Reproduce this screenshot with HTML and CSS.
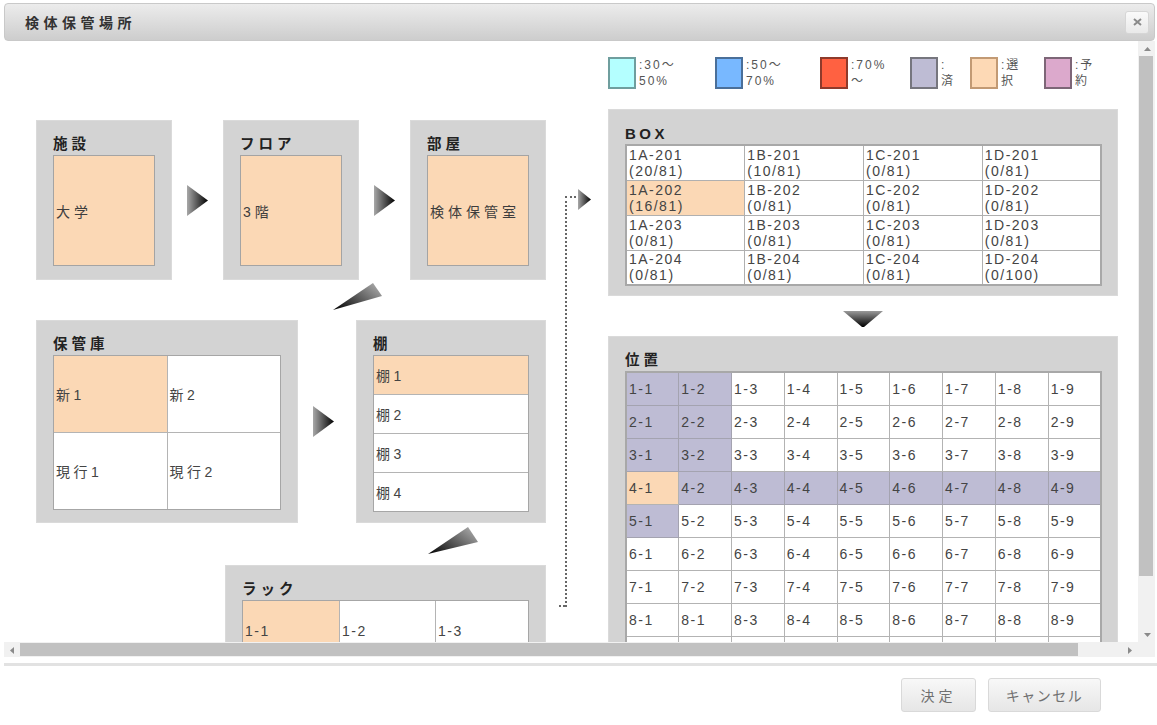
FILE: index.html
```html
<!DOCTYPE html>
<html lang="ja">
<head>
<meta charset="utf-8">
<title>検体保管場所</title>
<link rel="stylesheet" href="styles.css">
</head>
<body>
<div class="dialog">
  <div class="titlebar">
    <span class="title">検体保管場所</span>
    <button class="close" type="button" aria-label="閉じる">
      <svg width="9" height="8" viewBox="0 0 9 8"><path d="M1 1L8 7M8 1L1 7" stroke="#8a8a8a" stroke-width="2"/></svg>
    </button>
  </div>

  <div class="scrollarea">
    <div class="viewport">
      <div class="canvas">
        <div class="leftcol">
          <div class="row row1">
            <section class="panel p-small">
              <h3>施設</h3>
              <div class="single sel">大学</div>
            </section>
            <svg class="arrow-r" width="21" height="31" viewBox="0 0 21 31"><defs><linearGradient id="gr1" x1="0" y1="0" x2="1" y2="0"><stop offset="0" stop-color="#a8a8a8"/><stop offset="1" stop-color="#000"/></linearGradient></defs><polygon points="0,0 21,15.5 0,31" fill="url(#gr1)"/></svg>
            <section class="panel p-small">
              <h3>フロア</h3>
              <div class="single sel">3階</div>
            </section>
            <svg class="arrow-r" width="21" height="31" viewBox="0 0 21 31"><polygon points="0,0 21,15.5 0,31" fill="url(#gr1)"/></svg>
            <section class="panel p-small">
              <h3>部屋</h3>
              <div class="single sel">検体保管室</div>
            </section>
          </div>

          <div class="diag diag1">
            <svg width="50" height="28" viewBox="0 0 50 28"><defs><linearGradient id="gd" x1="0" y1="1" x2="1" y2="0.3"><stop offset="0" stop-color="#000"/><stop offset="1" stop-color="#a0a0a0"/></linearGradient></defs><polygon points="0,27 40,0 49,13" fill="url(#gd)"/></svg>
          </div>

          <div class="row row2">
            <section class="panel p-kura">
              <h3>保管庫</h3>
              <div class="kura">
                <div class="cell sel">新1</div>
                <div class="cell">新2</div>
                <div class="cell">現行1</div>
                <div class="cell">現行2</div>
              </div>
            </section>
            <svg class="arrow-r arrow-r2" width="21" height="31" viewBox="0 0 21 31"><polygon points="0,0 21,15.5 0,31" fill="url(#gr1)"/></svg>
            <section class="panel p-tana">
              <h3>棚</h3>
              <div class="tana">
                <div class="cell sel">棚1</div>
                <div class="cell">棚2</div>
                <div class="cell">棚3</div>
                <div class="cell">棚4</div>
              </div>
            </section>
          </div>

          <div class="diag diag2">
            <svg width="50" height="28" viewBox="0 0 50 28"><polygon points="0,27 40,0 50,15" fill="url(#gd)"/></svg>
          </div>

          <div class="row row3">
            <section class="panel p-rack">
              <h3>ラック</h3>
              <div class="rack">
                <div class="cell sel">1-1</div>
                <div class="cell">1-2</div>
                <div class="cell">1-3</div>
              </div>
            </section>
          </div>
        </div>

        <div class="midcol">
          <div class="connector"></div>
          <svg class="arrow-s" width="13" height="21" viewBox="0 0 13 21"><polygon points="0,0 13,10.5 0,21" fill="url(#gr1)"/></svg>
        </div>

        <div class="rightcol">
          <div class="legend">
            <div class="lg"><span class="sw sw-cyan"></span><span class="lt">:30～<br>50%</span></div>
            <div class="lg"><span class="sw sw-blue"></span><span class="lt">:50～<br>70%</span></div>
            <div class="lg"><span class="sw sw-red"></span><span class="lt">:70%<br>～</span></div>
            <div class="lg"><span class="sw sw-used"></span><span class="lt">:<br>済</span></div>
            <div class="lg"><span class="sw sw-sel"></span><span class="lt">:選<br>択</span></div>
            <div class="lg"><span class="sw sw-res"></span><span class="lt">:予<br>約</span></div>
          </div>

          <section class="panel p-box">
            <h3 class="latin">BOX</h3>
            <table class="boxtable">
              <tr><td>1A-201<br>(20/81)</td><td>1B-201<br>(10/81)</td><td>1C-201<br>(0/81)</td><td>1D-201<br>(0/81)</td></tr>
              <tr><td class="sel">1A-202<br>(16/81)</td><td>1B-202<br>(0/81)</td><td>1C-202<br>(0/81)</td><td>1D-202<br>(0/81)</td></tr>
              <tr><td>1A-203<br>(0/81)</td><td>1B-203<br>(0/81)</td><td>1C-203<br>(0/81)</td><td>1D-203<br>(0/81)</td></tr>
              <tr><td>1A-204<br>(0/81)</td><td>1B-204<br>(0/81)</td><td>1C-204<br>(0/81)</td><td>1D-204<br>(0/100)</td></tr>
            </table>
          </section>

          <div class="down">
            <svg width="40" height="16" viewBox="0 0 40 16"><defs><linearGradient id="gdown" x1="0" y1="0" x2="0" y2="1"><stop offset="0" stop-color="#9a9a9a"/><stop offset="1" stop-color="#000"/></linearGradient></defs><polygon points="0,0 40,0 21,16 19,16" fill="url(#gdown)"/></svg>
          </div>

          <section class="panel p-pos">
            <h3>位置</h3>
            <table class="postable">
              <tr><td class="used">1-1</td><td class="used">1-2</td><td>1-3</td><td>1-4</td><td>1-5</td><td>1-6</td><td>1-7</td><td>1-8</td><td>1-9</td></tr>
              <tr><td class="used">2-1</td><td class="used">2-2</td><td>2-3</td><td>2-4</td><td>2-5</td><td>2-6</td><td>2-7</td><td>2-8</td><td>2-9</td></tr>
              <tr><td class="used">3-1</td><td class="used">3-2</td><td>3-3</td><td>3-4</td><td>3-5</td><td>3-6</td><td>3-7</td><td>3-8</td><td>3-9</td></tr>
              <tr><td class="sel">4-1</td><td class="used">4-2</td><td class="used">4-3</td><td class="used">4-4</td><td class="used">4-5</td><td class="used">4-6</td><td class="used">4-7</td><td class="used">4-8</td><td class="used">4-9</td></tr>
              <tr><td class="used">5-1</td><td>5-2</td><td>5-3</td><td>5-4</td><td>5-5</td><td>5-6</td><td>5-7</td><td>5-8</td><td>5-9</td></tr>
              <tr><td>6-1</td><td>6-2</td><td>6-3</td><td>6-4</td><td>6-5</td><td>6-6</td><td>6-7</td><td>6-8</td><td>6-9</td></tr>
              <tr><td>7-1</td><td>7-2</td><td>7-3</td><td>7-4</td><td>7-5</td><td>7-6</td><td>7-7</td><td>7-8</td><td>7-9</td></tr>
              <tr><td>8-1</td><td>8-1</td><td>8-3</td><td>8-4</td><td>8-5</td><td>8-6</td><td>8-7</td><td>8-8</td><td>8-9</td></tr>
              <tr class="partial"><td></td><td></td><td></td><td></td><td></td><td></td><td></td><td></td><td></td></tr>
            </table>
          </section>
        </div>
      </div>
    </div>

    <div class="vscroll">
      <div class="sbtn"><svg width="7" height="4" viewBox="0 0 7 4"><polygon points="0,4 3.5,0 7,4" fill="#8a8a8a"/></svg></div>
      <div class="vthumb"></div>
      <div class="sfill"></div>
      <div class="sbtn"><svg width="7" height="4" viewBox="0 0 7 4"><polygon points="0,0 7,0 3.5,4" fill="#8a8a8a"/></svg></div>
    </div>
    <div class="hscroll">
      <div class="sbtn hbtn"><svg width="4" height="7" viewBox="0 0 4 7"><polygon points="4,0 4,7 0,3.5" fill="#8a8a8a"/></svg></div>
      <div class="hthumb"></div>
      <div class="sfill"></div>
      <div class="sbtn hbtn"><svg width="4" height="7" viewBox="0 0 4 7"><polygon points="0,0 4,3.5 0,7" fill="#8a8a8a"/></svg></div>
    </div>
    <div class="corner"></div>
  </div>

  <div class="sep"></div>

  <div class="footer">
    <button class="btn btn-ok" type="button">決定</button>
    <button class="btn btn-cancel" type="button">キャンセル</button>
  </div>
</div>
</body>
</html>
```

FILE: styles.css
```css
* { box-sizing: border-box; }
html, body { margin: 0; padding: 0; background: #fff; }
body {
  width: 1157px;
  height: 725px;
  overflow: hidden;
  font-family: "Liberation Sans", "Noto Sans CJK JP", sans-serif;
  color: #444;
}

.dialog { padding: 3px 2px 0 4px; }

/* title bar */
.titlebar {
  height: 38px;
  display: flex;
  align-items: center;
  justify-content: space-between;
  padding: 0 5px 0 20px;
  border: 1px solid #c9c9c9;
  border-radius: 4px;
  background: linear-gradient(#ececec, #cdcdcd);
}
.title {
  font-size: 14px;
  font-weight: bold;
  letter-spacing: 4.5px;
  color: #333;
}
.close {
  width: 24px;
  height: 23px;
  padding: 0;
  display: flex;
  align-items: center;
  justify-content: center;
  border: 1px solid #d6d6d6;
  border-radius: 3px;
  background: linear-gradient(#fafafa, #e9e9e9);
}

/* scroll area */
.scrollarea {
  display: grid;
  grid-template-columns: 1134px 17px;
  grid-template-rows: 601px 15px;
}
.viewport { overflow: hidden; }
.canvas {
  display: flex;
  width: 1180px;
  padding-left: 32px;
}

/* left column */
.leftcol { width: 510px; flex: none; padding-top: 79px; }
.row { display: flex; align-items: center; }
.row1 { justify-content: space-between; }
.arrow-r { flex: none; }
.arrow-r2 { margin: 0 22px 0 15px; }

.panel {
  background: #d3d3d3;
  border: 1px solid #dadada;
  padding: 13px 16px 13px 16px;
}
.panel h3 {
  margin: 0;
  height: 21px;
  line-height: 21px;
  font-size: 14.5px;
  font-weight: bold;
  letter-spacing: 4px;
  color: #222;
}
.panel h3.latin { letter-spacing: 3.5px; font-size: 15px; }

.p-small { width: 136px; height: 160px; }
.single {
  height: 111px;
  border: 1px solid #a4a4a4;
  display: flex;
  align-items: center;
  padding-left: 2px;
  font-size: 14px;
  letter-spacing: 4px;
  color: #3d3d3d;
}

.sel { background: #fbd8b5; }
.used { background: #bebcd4; }

.cell {
  background: #fff;
  display: flex;
  align-items: center;
  padding-left: 2px;
  font-size: 14px;
  letter-spacing: 3.5px;
  color: #444;
}
.cell.sel { background: #fbd8b5; }

.p-kura { width: 262px; height: 203px; }
.kura {
  height: 155px;
  display: grid;
  grid-template-columns: 1fr 1fr;
  grid-template-rows: 1fr 1fr;
  gap: 1px;
  background: #b4b4b4;
  border: 1px solid #a6a6a6;
}
.p-tana { width: 190px; height: 203px; }
.tana {
  height: 157px;
  display: grid;
  grid-template-rows: repeat(4, 1fr);
  gap: 1px;
  background: #b4b4b4;
  border: 1px solid #a6a6a6;
}

.diag { height: 40px; padding-top: 3px; }
.diag1 { padding-left: 297px; }
.diag2 { height: 42px; padding-left: 392px; padding-top: 4px; }

.row3 { padding-left: 189px; align-items: flex-start; }
.p-rack { width: 321px; height: 120px; }
.rack {
  display: grid;
  grid-template-columns: 96px 95px 1fr;
  grid-template-rows: 60px;
  gap: 1px;
  background: #b4b4b4;
  border: 1px solid #a6a6a6;
}
.rack .cell { letter-spacing: 1.5px; }

/* middle connector */
.midcol {
  width: 62px;
  flex: none;
  display: flex;
  align-items: flex-start;
  padding-top: 148px;
  padding-left: 19px;
}
.connector {
  position: relative;
  width: 11px;
  height: 411px;
  margin-top: 7px;
  border-left: 2px dotted #666;
  border-top: 2px dotted #666;
}
.connector::after {
  content: "";
  position: absolute;
  left: -8px;
  bottom: 0;
  width: 6px;
  border-top: 2px dotted #666;
}
.arrow-s { margin-left: 2px; flex: none; }

/* right column */
.rightcol { width: 510px; flex: none; padding-top: 16px; }

.legend {
  display: grid;
  grid-template-columns: 107px 105px 90px 60px 74px auto;
  height: 32px;
  margin-bottom: 20px;
}
.lg { display: flex; align-items: flex-start; }
.sw {
  width: 28px;
  height: 32px;
  border: 2px solid #777;
  flex: none;
}
.sw-cyan { background: #b4ffff; border-color: #6f9e9e; }
.sw-blue { background: #78b8ff; border-color: #4a6f99; }
.sw-red { background: #ff6141; border-color: #8e3a2b; }
.sw-used { background: #bebcd4; border-color: #76767e; }
.sw-sel { background: #fdd9b5; border-color: #c29a74; }
.sw-res { background: #dca9cc; border-color: #7d6677; }
.lt {
  margin-left: 3px;
  font-size: 12px;
  line-height: 16px;
  letter-spacing: 2px;
  color: #555;
}

.p-box { width: 510px; height: 187px; }
.boxtable, .postable {
  width: 477px;
  table-layout: fixed;
  border-collapse: collapse;
  border: 2px solid #a8a8a8;
  font-size: 14px;
  letter-spacing: 1.5px;
  color: #444;
}
.boxtable td {
  height: 35px;
  padding: 0 2px;
  border: 1px solid #b0b0b0;
  line-height: 16px;
  vertical-align: middle;
  background: #fff;
}
.boxtable td.sel { background: #fbd8b5; }

.down {
  height: 40px;
  display: flex;
  justify-content: center;
  padding-top: 15px;
}

.p-pos { width: 510px; height: 400px; }
.postable td {
  height: 33px;
  padding: 0 2px;
  border: 1px solid #b3b3b3;
  background: #fff;
  vertical-align: middle;
}
.postable td.used { background: #bebcd4; border-color: #a4a3b0; }
.postable td.sel { background: #fbd8b5; }

/* scrollbars */
.vscroll {
  display: flex;
  flex-direction: column;
  background: #f1f1f1;
  padding-left: 1px;
}
.sbtn {
  height: 15px;
  flex: none;
  display: flex;
  align-items: center;
  justify-content: center;
}
.vthumb { height: 520px; width: 14px; background: #c1c1c1; flex: none; }
.sfill { flex: 1; }
.hscroll {
  display: flex;
  background: #f1f1f1;
  padding-top: 1px;
}
.hbtn { height: auto; width: 16px; }
.hthumb { width: 1058px; height: 13px; background: #c1c1c1; flex: none; }
.corner { background: #f1f1f1; }

.sep {
  height: 3px;
  margin-top: 6px;
  margin-right: -2px;
  background: #e2e2e2;
}

.footer {
  display: flex;
  justify-content: flex-end;
  gap: 12px;
  margin-top: 12px;
  padding-right: 54px;
}
.btn {
  height: 34px;
  border: 1px solid #d9d9d9;
  border-radius: 3px;
  background: linear-gradient(#f8f8f8, #e6e6e6);
  font-family: "Liberation Sans", "Noto Sans CJK JP", sans-serif;
  font-size: 14px;
  color: #707070;
  padding: 0;
}
.btn-ok { width: 75px; letter-spacing: 4px; }
.btn-cancel { width: 113px; letter-spacing: 1.5px; }
```
